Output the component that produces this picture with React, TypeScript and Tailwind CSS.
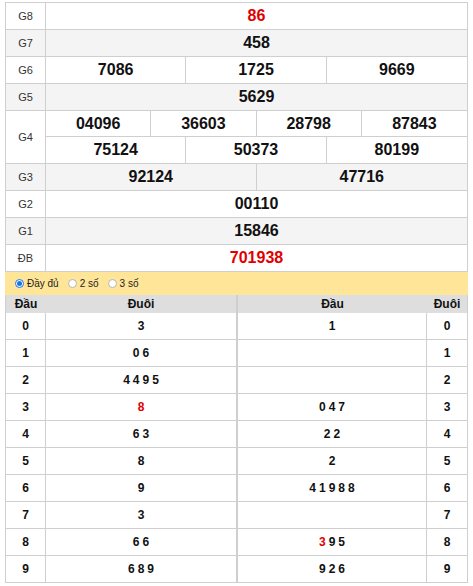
import React from "react";

const font = { fontFamily: '"Liberation Sans", Arial, sans-serif' };

type Prize = { label: string; rows: string[][]; red?: boolean; shaded?: boolean };

const prizes: Prize[] = [
  { label: "G8", rows: [["86"]], red: true },
  { label: "G7", rows: [["458"]], shaded: true },
  { label: "G6", rows: [["7086", "1725", "9669"]] },
  { label: "G5", rows: [["5629"]], shaded: true },
  {
    label: "G4",
    rows: [
      ["04096", "36603", "28798", "87843"],
      ["75124", "50373", "80199"],
    ],
  },
  { label: "G3", rows: [["92124", "47716"]], shaded: true },
  { label: "G2", rows: [["00110"]] },
  { label: "G1", rows: [["15846"]], shaded: true },
  { label: "ĐB", rows: [["701938"]], red: true },
];

const cols: Record<number, string> = {
  1: "grid-cols-1",
  2: "grid-cols-2",
  3: "grid-cols-3",
  4: "grid-cols-4",
};

// [đầu, đuôi left, đầu right]; "*" marks the special-prize digit
const loto: [string, string[], string[]][] = [
  ["0", ["3"], ["1"]],
  ["1", ["0", "6"], []],
  ["2", ["4", "4", "9", "5"], []],
  ["3", ["*8"], ["0", "4", "7"]],
  ["4", ["6", "3"], ["2", "2"]],
  ["5", ["8"], ["2"]],
  ["6", ["9"], ["4", "1", "9", "8", "8"]],
  ["7", ["3"], []],
  ["8", ["6", "6"], ["*3", "9", "5"]],
  ["9", ["6", "8", "9"], ["9", "2", "6"]],
];

function Digits({ list }: { list: string[] }) {
  return (
    <span className="flex gap-[3px]">
      {list.map((d, i) =>
        d.startsWith("*") ? (
          <span key={i} className="text-[#e10000]">
            {d.slice(1)}
          </span>
        ) : (
          <span key={i}>{d}</span>
        ),
      )}
    </span>
  );
}

function Radio({ checked, label }: { checked?: boolean; label: string }) {
  return (
    <label className="flex items-center gap-[3px]">
      {checked ? (
        <span className="flex h-[9px] w-[9px] items-center justify-center rounded-full border border-[#1a73e8] bg-white">
          <span className="h-[5px] w-[5px] rounded-full bg-[#1a73e8]" />
        </span>
      ) : (
        <span className="h-[9px] w-[9px] rounded-full border border-[#b5b5b5] bg-white" />
      )}
      <span>{label}</span>
    </label>
  );
}

export default function App() {
  return (
    <div className="bg-white pt-[2px] pl-[5px] text-[#111]" style={font}>
      <div className="w-[463px] border border-[#cfcfcf]">
        {prizes.map((p) => (
          <div
            key={p.label}
            className={`flex border-b border-[#cfcfcf] ${p.shaded ? "bg-[#f4f4f4]" : "bg-white"}`}
          >
            <div className="flex w-[40px] shrink-0 items-center justify-center border-r border-[#cfcfcf] text-[11px] text-[#333]">
              {p.label}
            </div>
            <div className="flex-1 divide-y divide-[#cfcfcf]">
              {p.rows.map((r, i) => (
                <div
                  key={i}
                  className={`grid h-[26px] divide-x divide-[#cfcfcf] ${cols[r.length]}`}
                >
                  {r.map((n) => (
                    <div
                      key={n}
                      className={`flex items-center justify-center text-[16px] font-bold ${p.red ? "text-[#e10000]" : ""}`}
                    >
                      {n}
                    </div>
                  ))}
                </div>
              ))}
            </div>
          </div>
        ))}
      </div>

      <div className="-mt-px flex h-[23px] w-[463px] items-center gap-[9px] bg-[#ffe597] pl-[10px] text-[10px] text-[#222]">
        <Radio checked label="Đầy đủ" />
        <Radio label="2 số" />
        <Radio label="3 số" />
      </div>

      <div className="flex w-[463px]">
        <div className="w-[232px] border-x border-[#cfcfcf]">
          <div className="flex h-[18px] items-center bg-[#dedede] text-[12px] font-bold">
            <div className="w-[40px] text-center">Đầu</div>
            <div className="flex-1 text-center">Đuôi</div>
          </div>
          {loto.map(([h, tails]) => (
            <div
              key={h}
              className="flex h-[27px] border-b border-[#cfcfcf] text-[12px] font-bold"
            >
              <div className="flex w-[40px] items-center justify-center border-r border-[#cfcfcf]">
                {h}
              </div>
              <div className="flex flex-1 items-center justify-center">
                <Digits list={tails} />
              </div>
            </div>
          ))}
        </div>
        <div className="w-[231px] border-x border-[#cfcfcf]">
          <div className="flex h-[18px] items-center bg-[#dedede] text-[12px] font-bold">
            <div className="flex-1 text-center">Đầu</div>
            <div className="w-[40px] text-center">Đuôi</div>
          </div>
          {loto.map(([t, , heads]) => (
            <div
              key={t}
              className="flex h-[27px] border-b border-[#cfcfcf] text-[12px] font-bold"
            >
              <div className="flex flex-1 items-center justify-center border-r border-[#cfcfcf]">
                <Digits list={heads} />
              </div>
              <div className="flex w-[40px] items-center justify-center">
                {t}
              </div>
            </div>
          ))}
        </div>
      </div>
    </div>
  );
}
